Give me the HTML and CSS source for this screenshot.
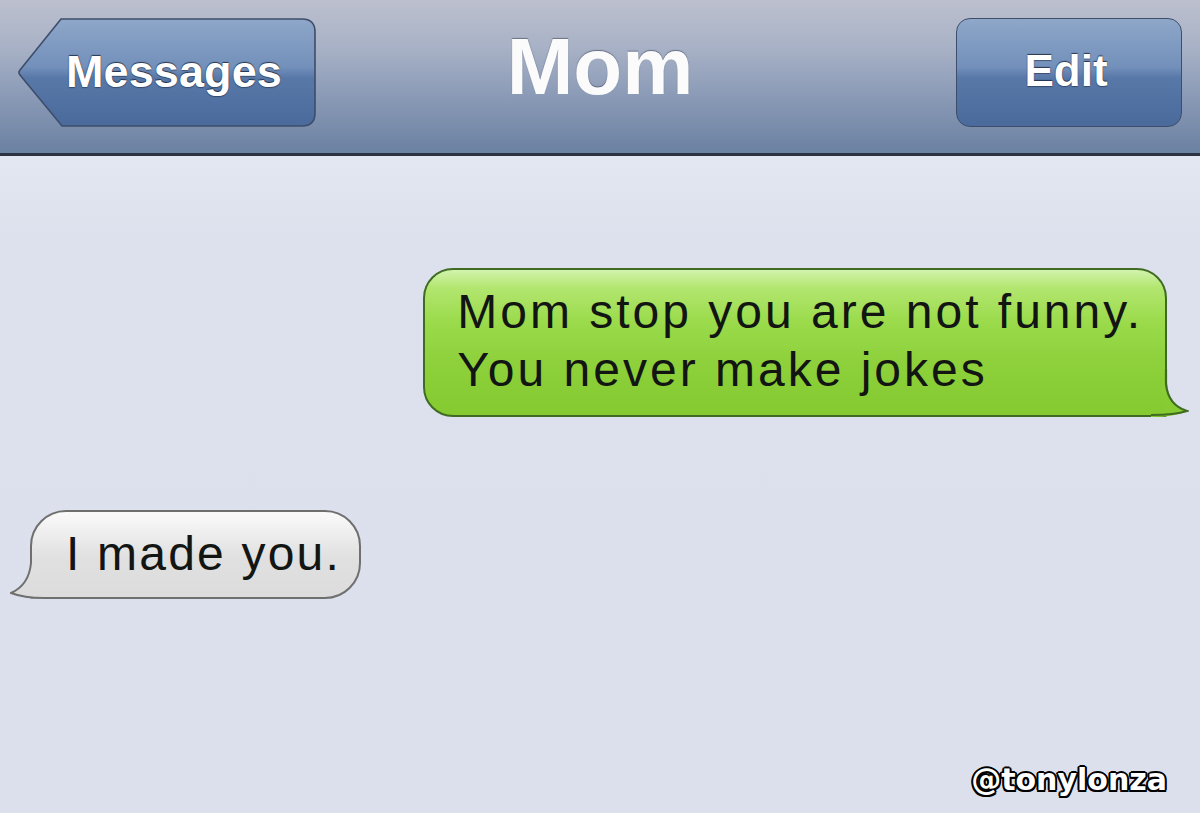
FILE: index.html
```html
<!DOCTYPE html>
<html>
<head>
<meta charset="utf-8">
<link rel="stylesheet" href="styles.css">
</head>
<body>
<header class="navbar">
  <div class="back-btn">
    <svg class="back-shape" width="298" height="109" viewBox="0 0 298 109">
      <defs>
        <linearGradient id="bg1" x1="0" y1="0" x2="0" y2="1">
          <stop offset="0" stop-color="#8ea7c9"/>
          <stop offset="0.45" stop-color="#7390bb"/>
          <stop offset="0.55" stop-color="#5878a8"/>
          <stop offset="1" stop-color="#4a6a9c"/>
        </linearGradient>
      </defs>
      <path d="M43 1 L284 1 Q297 1 297 14 L297 95 Q297 108 284 108 L44 108 L2 57 Q0 54.5 2 52 Z" fill="url(#bg1)" stroke="#3e4d69" stroke-width="1.6"/>
    </svg>
    <span class="back-label">Messages</span>
  </div>
  <h1 class="title">Mom</h1>
  <div class="edit-btn"><span>Edit</span></div>
</header>
<main class="thread">
  <div class="bubble sent">
    <p>Mom stop you are not funny.<br>You never make jokes</p>
    <svg class="tail tail-sent" width="52" height="48" viewBox="0 0 52 48">
      <defs>
        <linearGradient id="gt" x1="0" y1="0" x2="0" y2="1">
          <stop offset="0" stop-color="#8acf36"/>
          <stop offset="1" stop-color="#84ca30"/>
        </linearGradient>
      </defs>
      <path d="M25 14 L30.2 14 L30.2 15 Q31.5 36 50 42 Q38 48 14 48 L14 42 L25 42 Z" fill="url(#gt)"/>
      <path d="M29 0 L29 15 Q31 36 50 42 Q38 46 14 46" fill="none" stroke="#3f6c22" stroke-width="2.2"/>
    </svg>
  </div>
  <div class="bubble received">
    <p>I made you.</p>
    <svg class="tail tail-recv" width="46" height="48" viewBox="0 0 46 48">
      <defs>
        <linearGradient id="rt" x1="0" y1="0" x2="0" y2="1">
          <stop offset="0" stop-color="#e0e0e0"/>
          <stop offset="1" stop-color="#dcdcdc"/>
        </linearGradient>
      </defs>
      <path d="M25 12 L19.8 12 Q18.5 34 1 42 Q14 48 34 48 L34 42 L25 42 Z" fill="url(#rt)"/>
      <path d="M21 0 L21 12 Q19 34 1 42 Q14 47 34 47" fill="none" stroke="#6f6f6f" stroke-width="2"/>
    </svg>
  </div>
  <div class="watermark">@tonylonza</div>
</main>
</body>
</html>
```

FILE: styles.css
```css
* { box-sizing: border-box; }
html, body {
  margin: 0;
  padding: 0;
  width: 1200px;
  height: 813px;
  overflow: hidden;
}
body {
  background: #dce1ed;
  font-family: "Liberation Sans", Arial, sans-serif;
}

.navbar {
  height: 156px;
  display: grid;
  grid-template-columns: 1fr auto 1fr;
  align-items: start;
  padding: 18px 18px 0 18px;
  background: linear-gradient(#bcc0ce 0%, #a9b2c6 30%, #8b9bb7 62%, #6d83a3 97%);
  border-bottom: 3px solid #2d3340;
  box-shadow: 0 1px 0 #eef1f7;
}

.back-btn {
  position: relative;
  width: 298px;
  height: 109px;
  display: flex;
  align-items: center;
  padding-left: 48px;
  justify-self: start;
}
.back-shape {
  position: absolute;
  left: 0;
  top: 0;
}
.back-label {
  position: relative;
  color: #fff;
  font-weight: bold;
  font-size: 45px;
  letter-spacing: 0.1px;
  text-shadow: 0 -1px 1px rgba(20, 30, 50, 0.8), 0 1px 1px rgba(20, 30, 50, 0.5);
  margin-top: -2px;
}

.title {
  margin: 9px 0 0 0;
  color: #fbfbfb;
  font-weight: bold;
  font-size: 80px;
  line-height: 80px;
  text-shadow: 0 -1px 1px rgba(40, 50, 70, 0.5);
}

.edit-btn {
  justify-self: end;
  width: 226px;
  height: 109px;
  border-radius: 14px;
  border: 1.6px solid #3e4d69;
  background: linear-gradient(#8ea7c9 0%, #7390bb 45%, #5878a8 55%, #4a6a9c 100%);
  display: flex;
  align-items: center;
  justify-content: center;
}
.edit-btn span {
  color: #fff;
  font-weight: bold;
  font-size: 44px;
  text-shadow: 0 -1px 1px rgba(20, 30, 50, 0.8), 0 1px 1px rgba(20, 30, 50, 0.5);
  margin-top: -3px;
  margin-left: -6px;
}

.thread {
  height: 657px;
  display: flex;
  flex-direction: column;
  padding-top: 112px;
  background: linear-gradient(#e3e7f1 0%, #dce1ed 12%, #dbe0ec 100%);
}

.bubble {
  position: relative;
  border: 2px solid;
}
.bubble p {
  position: relative;
  z-index: 1;
  margin: 0;
  font-size: 48px;
  line-height: 58px;
  color: #121512;
  white-space: nowrap;
}

.sent {
  align-self: flex-end;
  margin-right: 33px;
  padding: 13px 22px 16px 32px;
  border-color: #3f6c22;
  border-radius: 30px 30px 2px 30px;
  background: linear-gradient(#d2f3ad 0%, #b3e670 12%, #9bdb4c 35%, #8ed13c 62%, #84ca30 100%);
}
.sent p { letter-spacing: 3px; }

.received {
  align-self: flex-start;
  margin-left: 30px;
  margin-top: 93px;
  padding: 13px 18px 14px 34px;
  border-color: #6f6f6f;
  border-radius: 36px 36px 36px 2px;
  background: linear-gradient(#fafafa 0%, #ececec 30%, #e4e4e4 45%, #e0e0e0 55%, #dcdcdc 100%);
}
.received p { letter-spacing: 2.2px; }

.tail {
  position: absolute;
  z-index: 0;
}
.tail-sent {
  right: -24px;
  bottom: -2px;
}
.tail-recv {
  left: -22px;
  bottom: -2px;
}

.watermark {
  margin-top: auto;
  align-self: flex-end;
  margin-right: 33px;
  margin-bottom: 15px;
  font-family: "DejaVu Sans", sans-serif;
  font-weight: bold;
  font-size: 30px;
  line-height: 36px;
  color: #fff;
  text-shadow:
    2px 0 0 #000, -2px 0 0 #000, 0 2px 0 #000, 0 -2px 0 #000,
    1.5px 1.5px 0 #000, -1.5px 1.5px 0 #000, 1.5px -1.5px 0 #000, -1.5px -1.5px 0 #000;
}
```
